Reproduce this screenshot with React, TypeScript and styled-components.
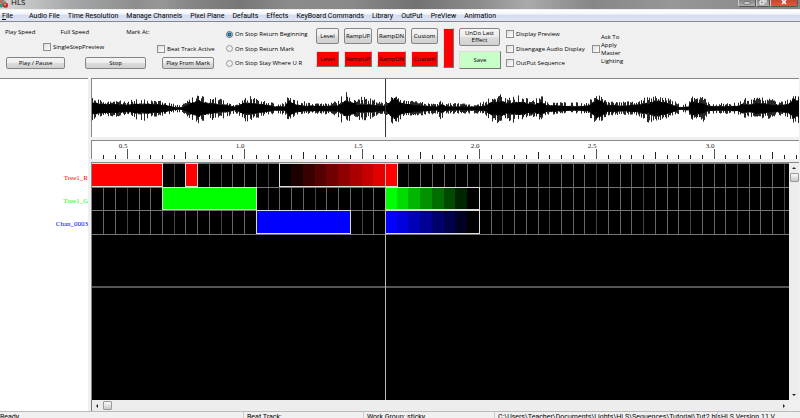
import React, { useEffect, useState } from "react";
import styled, { createGlobalStyle } from "styled-components";

const GlobalStyle = createGlobalStyle`
  * { box-sizing: border-box; }
  body {
    margin: 0;
    overflow: hidden;
    background: #f0f0f0;
    color: #000;
    font-family: "Open Sans", "Noto Sans", sans-serif;
    font-size: 6px;
    line-height: 8px;
  }
  button, input { font: inherit; color: inherit; margin: 0; padding: 0; }
`;

const Window = styled.div`
  display: flex;
  flex-direction: column;
  height: 100vh;
`;

/* ---------- title bar ---------- */

const TitleBar = styled.header`
  display: flex;
  align-items: flex-start;
  flex: none;
  height: 9px;
  padding-right: 2px;
  overflow: hidden;
  background: linear-gradient(90deg, #d8d8d8 0, #a5a7a8 9%, #8e8e8e 17%, #979797 20%, #858585 24%, #777 30%, #8b8b8b 36%, #898989 44%, #727272 52%, #8c8c8c 60%, #aaa 66%, #868686 74%, #979797 84%, #858585 100%);
`;

const Title = styled.h1`
  flex: 1;
  margin: -3px 0 0 2px;
  font-size: 8px;
  font-weight: 400;
  line-height: 10px;
`;

const CaptionButton = styled.button<{ $width: number; $close?: boolean }>`
  display: flex;
  justify-content: center;
  width: ${(p) => p.$width}px;
  height: 7px;
  border: 1px solid #555;
  border-top: 0;
  border-left-color: #ccc;
  border-radius: 0 0 2px 2px;
  background: ${(p) => (p.$close ? "linear-gradient(#c24a30, #d8593a)" : "linear-gradient(#858585, #b0b0b0)")};
`;

const MenuBar = styled.nav`
  display: flex;
  align-items: center;
  gap: 8px;
  flex: none;
  height: 12px;
  padding: 0 2px;
  border-top: 1px solid #eee;
  background: linear-gradient(#fff 0, #f3f5fb 35%, #d5dcee 50%, #dfe5f5 100%);
`;

const MenuItem = styled.button<{ $wide?: boolean }>`
  margin-right: ${(p) => (p.$wide ? 8 : 0)}px;
  border: 0;
  background: none;
  font-family: Roboto, sans-serif;
  font-size: 7px;
  line-height: 10px;
  white-space: nowrap;
`;

/* ---------- toolbar ---------- */

const Toolbar = styled.section`
  display: flex;
  flex: none;
  height: 57px;
  padding: 6px 5px 9px;
  border-top: 1px solid #888;
  white-space: nowrap;
`;

const Group = styled.div<{ $width: number; $inset?: boolean; $low?: boolean }>`
  display: flex;
  flex-direction: column;
  justify-content: ${(p) => (p.$low ? "flex-end" : "space-between")};
  gap: ${(p) => (p.$low ? 4 : 0)}px;
  flex: none;
  width: ${(p) => p.$width}px;
  padding: ${(p) => (p.$inset ? "2px 0" : "0")};
`;

const Line = styled.div<{ $gap?: number; $indent?: number }>`
  display: flex;
  align-items: center;
  gap: ${(p) => p.$gap ?? 0}px;
  padding-left: ${(p) => p.$indent ?? 0}px;
`;

const Choice = styled.label`
  display: flex;
  align-items: center;
  gap: 2px;
`;

const Check = styled.input.attrs({ type: "checkbox" })`
  appearance: none;
  flex: none;
  width: 8px;
  height: 8px;
  border: 1px solid #8e8f8f;
  background: linear-gradient(135deg, #dcdcdc, #fff);
`;

const Radio = styled.input.attrs({ type: "radio" })`
  appearance: none;
  flex: none;
  width: 7px;
  height: 7px;
  border: 1px solid #999;
  border-radius: 50%;
  background: #eee;
  &:checked {
    border-color: #567;
    background: radial-gradient(circle, #27a5d8 0, #145878 40%, #dce8ee 70%);
  }
`;

const PushButton = styled.button<{ $width: number; $height?: number }>`
  width: ${(p) => p.$width}px;
  height: ${(p) => p.$height ?? 12}px;
  border: 1px solid #858585;
  border-radius: 2px;
  background: linear-gradient(#f5f5f5 0, #ececec 48%, #dcdcdc 52%, #d0d0d0 100%);
  line-height: 7px;
  white-space: normal;
`;

const ColorButton = styled.button<{ $width: number; $height: number; $color: string }>`
  width: ${(p) => p.$width}px;
  height: ${(p) => p.$height}px;
  border: 1px solid #ddd;
  border-right-color: #777;
  border-bottom-color: #777;
  background: ${(p) => p.$color};
`;

const EffectGrid = styled.div`
  display: grid;
  grid-template-columns: 23px 28px 29px 27px;
  gap: 7px 5px;
  flex: none;
  width: 127px;
  align-content: start;
`;

const Lighting = styled.label`
  display: flex;
  align-items: center;
  gap: 1px;
  width: 36px;
  line-height: 8px;
  white-space: normal;
`;

/* ---------- work area ---------- */

const WorkArea = styled.main`
  display: grid;
  grid-template-columns: 88px minmax(0, 1fr);
  gap: 3px;
  flex: 1;
  min-height: 0;
`;

const ChannelPanel = styled.aside`
  padding: 88px 0 0;
  border-top: 1px solid #888;
  background: #fff;
`;

const ChannelName = styled.div<{ $color: string }>`
  height: 23px;
  color: ${(p) => p.$color};
  font: 7px/23px "Liberation Serif", serif;
  text-align: right;
`;

const Tracks = styled.div`
  display: flex;
  flex-direction: column;
  min-width: 0;
  min-height: 0;
  padding-right: 1px;
`;

const Pane = styled.div<{ $height: number }>`
  flex: none;
  height: ${(p) => p.$height}px;
  border-top: 1px solid #888;
  background: #fff;
`;

const Drawing = styled.svg`
  display: block;
  width: 100%;
  height: 100%;
`;

const Spacer = styled.div`
  flex: none;
  height: 3px;
`;

const Editor = styled.div`
  display: grid;
  grid-template-columns: minmax(0, 1fr) 10px;
  grid-template-rows: minmax(0, 1fr) 11px;
  flex: 1;
  min-height: 0;
  border-top: 1px solid #888;
`;

const Canvas = styled.div`
  min-width: 0;
  min-height: 0;
  overflow: hidden;
  background: #000;
`;

const ScrollTrack = styled.div<{ $vertical?: boolean }>`
  display: flex;
  flex-direction: ${(p) => (p.$vertical ? "column" : "row")};
  align-items: center;
  border: 0 solid #777;
  border-left-width: ${(p) => (p.$vertical ? 0 : 1)}px;
  background: #ededed;
`;

const ScrollButton = styled.button`
  display: flex;
  align-items: center;
  justify-content: center;
  width: 10px;
  height: 10px;
  border: 0;
  background: none;
`;

const Thumb = styled.div<{ $vertical?: boolean }>`
  width: 9px;
  height: 9px;
  margin: ${(p) => (p.$vertical ? "0 0 auto" : "0 auto 0 1px")};
  border: 1px solid #999;
  border-radius: 1px;
  background: linear-gradient(#fafafa, #c8c8c8);
`;

const StatusBar = styled.footer`
  display: grid;
  grid-template-columns: 243px 120px 131px 223px 1fr;
  flex: none;
  height: 7px;
  overflow: hidden;
  border-top: 1px solid #bbb;
  font-family: Roboto, sans-serif;
  font-size: 7px;
  line-height: 11px;
  white-space: nowrap;
`;

const StatusCell = styled.span`
  padding-left: 3px;
  border-left: 1px solid #ccc;
  &:first-child { padding-left: 0; border: 0; }
`;

/* ---------- data ---------- */

const MENU = ["Audio File", "Time Resolution", "Manage Channels", "Pixel Plane", "Defaults", "Effects", "KeyBoard Commands", "Library", "OutPut", "PreView", "Animation"];
const EFFECTS: [string, number][] = [["Level", 23], ["RampUP", 28], ["RampDN", 29], ["Custom", 27]];
const CHANNELS = [["Tree1_R", "#ff0000"], ["Tree1_G", "#00ff00"], ["Chan_0003", "#0000ff"]];

const CELL = 11.735;
const CELLS = 220;
const ROW = 23.5;
const PLAYHEAD = 294;

const cellX = (i: number) => (i === 0 ? 0 : Math.round(i * CELL + 0.6));

type Clip = { row: number; from: number; to: number; rgb: number[]; ramp?: "up" | "down" };
const CLIPS: Clip[] = [
  { row: 0, from: 0, to: 6, rgb: [255, 0, 0] },
  { row: 0, from: 8, to: 9, rgb: [255, 0, 0] },
  { row: 0, from: 16, to: 26, rgb: [255, 0, 0], ramp: "up" },
  { row: 1, from: 6, to: 14, rgb: [0, 255, 0] },
  { row: 1, from: 25, to: 33, rgb: [0, 255, 0], ramp: "down" },
  { row: 2, from: 14, to: 22, rgb: [0, 0, 255] },
  { row: 2, from: 25, to: 33, rgb: [0, 0, 255], ramp: "down" },
];

// Loudness along the track: position, peak above, peak below, solid core.
const ENVELOPE = [
  [0, 9, 11, 7], [6, 9, 8, 6], [14, 5, 6, 5], [24, 7, 7, 5], [36, 6, 5, 4], [46, 11, 13, 5], [54, 8, 11, 5], [61, 9, 8, 5],
  [74, 5, 5, 4], [84, 4, 3, 1], [91, 3, 3, 1], [99, 9, 9, 6], [107, 14, 15, 9], [114, 9, 10, 7], [121, 11, 11, 5], [134, 7, 8, 4],
  [144, 2, 3, 2], [152, 9, 12, 6], [159, 11, 12, 6], [167, 9, 8, 5], [174, 6, 5, 4], [185, 4, 4, 2], [193, 4, 5, 2], [197, 13, 12, 9],
  [203, 7, 6, 5], [211, 6, 5, 3], [224, 4, 4, 3], [239, 5, 5, 3], [246, 7, 6, 3], [249, 11, 12, 5], [255, 15, 14, 9], [261, 10, 9, 7],
  [265, 7, 8, 5], [271, 11, 12, 4], [279, 9, 9, 4], [287, 6, 5, 3], [293, 4, 4, 3], [296, 6, 6, 4], [300, 11, 14, 10], [303, 11, 15, 12],
  [307, 11, 12, 9], [313, 7, 6, 5], [324, 6, 6, 4], [334, 5, 5, 3], [346, 3, 4, 2], [349, 9, 11, 5], [355, 4, 4, 2], [369, 4, 4, 2],
  [384, 3, 4, 2], [394, 6, 5, 3], [399, 11, 11, 7], [405, 11, 13, 7], [409, 15, 14, 9], [415, 9, 10, 6], [422, 12, 13, 6], [431, 12, 10, 7],
  [439, 7, 6, 5], [444, 8, 8, 5], [450, 12, 11, 7], [455, 5, 6, 4], [469, 5, 4, 3], [484, 5, 4, 2], [497, 5, 5, 3], [501, 12, 12, 6],
  [506, 12, 13, 11], [510, 11, 12, 9], [515, 6, 6, 4], [529, 6, 5, 3], [544, 6, 5, 4], [552, 10, 12, 5], [557, 10, 14, 6], [565, 11, 11, 9],
  [574, 10, 9, 7], [581, 8, 7, 4], [589, 3, 3, 1], [597, 4, 4, 2], [600, 11, 11, 9], [607, 9, 9, 7], [612, 11, 12, 5], [617, 5, 4, 3],
  [629, 4, 4, 2], [647, 5, 5, 3], [652, 12, 11, 5], [657, 7, 7, 4], [666, 10, 8, 6], [677, 9, 9, 5], [689, 6, 6, 4], [697, 8, 8, 5],
  [702, 12, 13, 10], [709, 11, 13, 9],
];
const SPAN = 709;

const noise = (n: number) => {
  const v = Math.sin(n * 127.1 + 31.7) * 43758.5453;
  return v - Math.floor(v);
};

function levels(x: number) {
  const p = x % SPAN;
  let i = 1;
  while (i < ENVELOPE.length - 1 && ENVELOPE[i][0] < p) i++;
  const a = ENVELOPE[i - 1];
  const b = ENVELOPE[i];
  const t = (p - a[0]) / (b[0] - a[0]);
  return [1, 2, 3].map((k) => a[k] + (b[k] - a[k]) * t);
}

const WAVE = (() => {
  let peaks = "";
  let core = "";
  for (let x = 0; x < 2600; x++) {
    const [up, down, solid] = levels(x);
    const beat = noise(x * 0.71) > 0.45 ? 1 : 0.25;
    const top = solid * 0.7 + (up + 1.5 - solid * 0.7) * beat * (0.5 + noise(x) * 0.5);
    const bottom = solid * 0.7 + (down + 1.5 - solid * 0.7) * beat * (0.5 + noise(x + 0.5) * 0.5);
    peaks += `M${x + 0.5} ${(29.5 - top).toFixed(1)}V${(29.5 + bottom).toFixed(1)}`;
    const c = solid * (0.7 + noise(x * 3) * 0.3);
    core += `M${x + 0.5} ${(29.5 - c).toFixed(1)}V${(29.5 + c).toFixed(1)}`;
  }
  return { peaks, core };
})();

/* ---------- parts ---------- */

const Waveform = () => (
  <Drawing role="img" aria-label="Audio waveform">
    <path d={WAVE.peaks} stroke="#000" strokeOpacity="0.85" />
    <path d={WAVE.core} stroke="#000" strokeWidth="1.2" />
    <path d={`M${PLAYHEAD + 0.5} 0V58`} stroke="#333" />
    <path d="M0.5 0V58" stroke="#888" />
  </Drawing>
);

const RulerText = styled.text`
  fill: #222;
  font: 7px "Liberation Serif", serif;
  text-anchor: end;
`;

function useWindowWidth() {
  const [width, setWidth] = useState(window.innerWidth);
  useEffect(() => {
    const update = () => setWidth(window.innerWidth);
    window.addEventListener("resize", update);
    return () => window.removeEventListener("resize", update);
  }, []);
  return width;
}

function Ruler() {
  const visible = Math.floor((useWindowWidth() - 93) / CELL) + 1;
  return (
    <Drawing role="img" aria-label="Time in seconds">
      {Array.from({ length: Math.min(CELLS, visible) }, (_, i) => {
        const x = cellX(i) + 0.5;
        const major = i % 10 === 3;
        const half = i % 10 === 8;
        return (
          <React.Fragment key={i}>
            <path d={`M${x} ${major ? 8 : half ? 11 : 14}V18`} stroke={major ? "#555" : "#222"} />
            {major && <RulerText x={x} y="7">{(0.5 + ((i - 3) / 10) * 0.5).toFixed(1)}</RulerText>}
          </React.Fragment>
        );
      })}
      <path d="M0.5 0V18" stroke="#888" />
    </Drawing>
  );
}

function ClipShape({ clip }: { clip: Clip }) {
  const count = clip.ramp ? clip.to - clip.from : 1;
  const left = cellX(clip.from);
  const right = cellX(clip.to);
  const top = Math.round(clip.row * ROW) + 1;
  const bottom = Math.round((clip.row + 1) * ROW);
  return (
    <g>
      {Array.from({ length: count }, (_, i) => {
        const x0 = count === 1 ? left : cellX(clip.from + i);
        const x1 = count === 1 ? right : cellX(clip.from + i + 1);
        const k = count === 1 ? 1 : clip.ramp === "up" ? i / (count - 1) : 1 - i / (count - 1);
        const fill = `rgb(${clip.rgb.map((c) => Math.round(c * k)).join(",")})`;
        return <rect key={i} x={x0} y={top} width={x1 - x0} height={bottom - top} fill={fill} />;
      })}
      <rect x={left + 0.5} y={top - 0.5} width={right - left} height={bottom - top} fill="none" stroke="#ddd" />
    </g>
  );
}

const Sequence = () => (
  <Drawing role="img" aria-label="Channel sequence">
    {Array.from({ length: CELLS }, (_, i) => (
      <path key={i} d={`M${cellX(i) + 0.5} 0V71`} stroke={i % 4 === 3 ? "#444" : "#666"} />
    ))}
    {[0, 1, 2, 3].map((r) => (
      <path key={r} d={`M0 ${Math.round(r * ROW) + 0.5}H2600`} stroke="#777" />
    ))}
    <path d="M0 124H2600" stroke="#555" strokeWidth="2" />
    {CLIPS.map((clip, i) => <ClipShape key={i} clip={clip} />)}
    <path d={`M${PLAYHEAD + 0.5} 0V2000`} stroke="#bbb" />
    <path d="M0.5 0V2000" stroke="#888" />
  </Drawing>
);

const Arrow = ({ d }: { d: string }) => (
  <svg width="4" height="4" viewBox="0 0 4 4" aria-hidden="true"><path d={d} fill="#222" /></svg>
);

export default function App() {
  return (
    <Window>
      <GlobalStyle />
      <TitleBar>
        <svg width="9" height="8" viewBox="0 0 9 8" aria-hidden="true">
          <path d="M0 0H4V4L2 5L0 3Z" fill="#b96c5f" />
          <path d="M3 0L6 1L5 4L3 3Z" fill="#6f9f97" />
          <circle cx="1.5" cy="5.5" r="2" fill="#309a86" />
          <circle cx="5.5" cy="5.2" r="2.6" fill="#c72f27" />
          <circle cx="5" cy="4.6" r="1" fill="#f09a88" />
        </svg>
        <Title>HLS</Title>
        <CaptionButton $width={18} aria-label="Minimize">
          <svg width="8" height="6" viewBox="0 0 8 6"><path d="M1 2H7V4H1Z" fill="#fff" stroke="#444" strokeWidth=".6" /></svg>
        </CaptionButton>
        <CaptionButton $width={14} aria-label="Restore">
          <svg width="8" height="6" viewBox="0 0 8 6"><path d="M3 0H7V3M1 1H5V4H1Z" fill="none" stroke="#fff" /></svg>
        </CaptionButton>
        <CaptionButton $width={28} $close aria-label="Close">
          <svg width="8" height="6" viewBox="0 0 8 6"><path d="M2 0L6 4M6 0L2 4" stroke="#fff" strokeWidth="1.5" /></svg>
        </CaptionButton>
      </TitleBar>
      <MenuBar>
        <MenuItem $wide><u>F</u>ile</MenuItem>
        {MENU.map((m) => <MenuItem key={m}>{m}</MenuItem>)}
      </MenuBar>

      <Toolbar>
        <Group $width={152}>
          <Line $gap={25}>
            <span>Play Speed</span><span>Full Speed</span>
            <Line $indent={12}>Mark At:</Line>
          </Line>
          <Line $indent={38}><Choice><Check />SingleStepPreview</Choice></Line>
          <Line $gap={20} $indent={1}>
            <PushButton $width={59}>Play / Pause</PushButton>
            <PushButton $width={61}>Stop</PushButton>
          </Line>
        </Group>
        <Group $width={69} $low>
          <Line><Choice><Check />Beat Track Active</Choice></Line>
          <Line $indent={5}><PushButton $width={52}>Play From Mark</PushButton></Line>
        </Group>
        <Group $width={90} $inset>
          <Choice><Radio name="stop" defaultChecked />On Stop Return Beginning</Choice>
          <Choice><Radio name="stop" />On Stop Return Mark</Choice>
          <Choice><Radio name="stop" />On Stop Stay Where U R</Choice>
        </Group>
        <EffectGrid>
          {EFFECTS.map(([name, w]) => <PushButton key={name} $width={w} $height={16}>{name}</PushButton>)}
          {EFFECTS.map(([name, w]) => <ColorButton key={name} $width={w} $height={16} $color="#ff0000">{name}</ColorButton>)}
        </EffectGrid>
        <Group $width={16}>
          <ColorButton $width={11} $height={40} $color="#ff0000" aria-label="Current color" />
        </Group>
        <Group $width={47}>
          <PushButton $width={41} $height={18}>UnDo Last Effect</PushButton>
          <ColorButton $width={42} $height={18} $color="#c8ffc8">Save</ColorButton>
        </Group>
        <Group $width={86} $inset>
          <Choice><Check />Display Preview</Choice>
          <Choice><Check />Disengage Audio Display</Choice>
          <Choice><Check />OutPut Sequence</Choice>
        </Group>
        <Lighting><Check /><span>Ask To Apply Master Lighting</span></Lighting>
      </Toolbar>

      <WorkArea>
        <ChannelPanel>
          {CHANNELS.map(([name, color]) => <ChannelName key={name} $color={color}>{name}</ChannelName>)}
        </ChannelPanel>
        <Tracks>
          <Pane $height={59}><Waveform /></Pane>
          <Spacer />
          <Pane $height={19}><Ruler /></Pane>
          <Spacer />
          <Editor>
            <Canvas><Sequence /></Canvas>
            <ScrollTrack $vertical>
              <ScrollButton aria-label="Scroll up"><Arrow d="M0 3L2 1L4 3Z" /></ScrollButton>
              <Thumb $vertical />
              <ScrollButton aria-label="Scroll down"><Arrow d="M0 1L2 3L4 1Z" /></ScrollButton>
            </ScrollTrack>
            <ScrollTrack>
              <ScrollButton aria-label="Scroll left"><Arrow d="M3 0L1 2L3 4Z" /></ScrollButton>
              <Thumb />
              <ScrollButton aria-label="Scroll right"><Arrow d="M1 0L3 2L1 4Z" /></ScrollButton>
            </ScrollTrack>
          </Editor>
        </Tracks>
      </WorkArea>

      <StatusBar>
        <StatusCell>Ready</StatusCell>
        <StatusCell>Beat Track:</StatusCell>
        <StatusCell>Work Group: sticky</StatusCell>
        <StatusCell>C:\Users\Teacher\Documents\Lights\HLS\Sequences\Tutorial\Tut2.hls</StatusCell>
        <StatusCell>HLS Version 11 V</StatusCell>
      </StatusBar>
    </Window>
  );
}
